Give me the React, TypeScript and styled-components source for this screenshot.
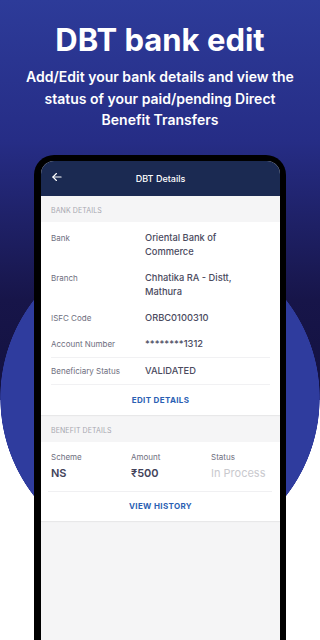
import React from "react";
import styled, { createGlobalStyle } from "styled-components";

const Global = createGlobalStyle`
  html, body { margin: 0; padding: 0; }
  body { font-family: Inter, "Noto Sans", sans-serif; -webkit-font-smoothing: antialiased; }
  * { box-sizing: border-box; }
`;

const Page = styled.div`
  width: 320px;
  height: 640px;
  overflow: hidden;
  display: flex;
  flex-direction: column;
  align-items: center;
  background:
    radial-gradient(circle 160px at 160px 398px, #2f3c9e 159.4px, rgba(47, 60, 158, 0) 160px),
    linear-gradient(180deg, #2d3b99 0px, #262d86 140px, #171549 300px, #131140 400px, #ffffff 400px);
`;

const Title = styled.h1`
  margin: 21px 0 0;
  font-size: 31px;
  line-height: 38px;
  font-weight: 700;
  color: #ffffff;
  text-align: center;
`;

const Subtitle = styled.p`
  margin: 7px 0 0;
  width: 272px;
  font-size: 14px;
  line-height: 21.5px;
  font-weight: 600;
  color: #ffffff;
  text-align: center;
`;

const PhoneFrame = styled.div`
  margin-top: 24px;
  width: 252px;
  flex: 1;
  background: #000;
  border-radius: 20px 20px 0 0;
  padding: 6px 6px 0 7px;
  display: flex;
`;

const Screen = styled.div`
  flex: 1;
  background: #f5f5f6;
  border-radius: 13px 13px 0 0;
  overflow: hidden;
  display: flex;
  flex-direction: column;
`;

const AppBar = styled.div`
  height: 35px;
  background: #1b2a52;
  position: relative;
  display: flex;
  align-items: center;
  justify-content: center;
  color: #fff;
  font-size: 9px;
  font-weight: 500;
`;

const BackButton = styled.span`
  position: absolute;
  left: 9px;
  top: 9px;
  display: flex;
`;

const SectionLabel = styled.div<{ $h: number }>`
  height: ${(p) => p.$h}px;
  padding: 4px 10px 0;
  display: flex;
  align-items: center;
  font-size: 7px;
  letter-spacing: 0.1px;
  color: #a7a7b0;
  text-transform: uppercase;
`;

const Card = styled.div`
  background: #fff;
  box-shadow: 0 1px 1px rgba(0, 0, 0, 0.05);
`;

const DetailList = styled.div`
  padding: 3px 10px 0;
  display: flex;
  flex-direction: column;
`;

const DetailRow = styled.div<{ $divider?: boolean }>`
  display: grid;
  grid-template-columns: 94px 1fr;
  padding: 6px 0;
  ${(p) => (p.$divider ? "border-bottom: 1px solid #f1f1f3;" : "")}
`;

const Label = styled.div`
  font-size: 8px;
  line-height: 14px;
  color: #6e6e7e;
`;

const Value = styled.div`
  font-size: 9.3px;
  line-height: 14px;
  font-weight: 500;
  color: #4a4a5e;
`;

const ActionRow = styled.div<{ $h: number }>`
  height: ${(p) => p.$h}px;
  display: flex;
  align-items: center;
  justify-content: center;
  font-size: 8px;
  font-weight: 700;
  letter-spacing: 0.35px;
  color: #2b5fb3;
`;

const BenefitGrid = styled.div`
  display: grid;
  grid-template-columns: 80px 80px 1fr;
  padding: 9px 0 11px 3px;
  margin: 0 8px 0 7px;
  border-bottom: 1px solid #f0f0f2;
`;

const BenefitCell = styled.div`
  display: flex;
  flex-direction: column;
  gap: 3px;
`;

const BenefitLabel = styled.div`
  font-size: 8px;
  line-height: 12px;
  color: #6e6e7e;
`;

const BenefitValue = styled.div<{ $muted?: boolean }>`
  font-size: 11px;
  line-height: 14px;
  white-space: nowrap;
  font-weight: ${(p) => (p.$muted ? 400 : 600)};
  color: ${(p) => (p.$muted ? "#c9c9ce" : "#43435a")};
`;

const details: { label: string; value: React.ReactNode; divider?: boolean }[] = [
  { label: "Bank", value: <>Oriental Bank of<br />Commerce</> },
  { label: "Branch", value: <>Chhatika RA - Distt,<br />Mathura</> },
  { label: "ISFC Code", value: "ORBC0100310" },
  { label: "Account Number", value: "********1312", divider: true },
  { label: "Beneficiary Status", value: "VALIDATED", divider: true },
];

const benefits = [
  { label: "Scheme", value: "NS" },
  { label: "Amount", value: "₹500" },
  { label: "Status", value: "In Process", muted: true },
];

export default function App() {
  return (
    <>
      <Global />
      <Page>
        <Title>DBT bank edit</Title>
        <Subtitle>
          Add/Edit your bank details and view the status of your paid/pending Direct Benefit Transfers
        </Subtitle>
        <PhoneFrame>
          <Screen>
            <AppBar>
              <BackButton>
                <svg width="14" height="14" viewBox="0 0 24 24" fill="none" stroke="#ffffff" strokeWidth="2" strokeLinecap="round" strokeLinejoin="round">
                  <path d="M19 12H5" />
                  <path d="m11 18-6-6 6-6" />
                </svg>
              </BackButton>
              DBT Details
            </AppBar>
            <SectionLabel $h={26}>Bank Details</SectionLabel>
            <Card>
              <DetailList>
                {details.map((d) => (
                  <DetailRow key={d.label} $divider={d.divider}>
                    <Label>{d.label}</Label>
                    <Value>{d.value}</Value>
                  </DetailRow>
                ))}
              </DetailList>
              <ActionRow $h={30}>EDIT DETAILS</ActionRow>
            </Card>
            <SectionLabel $h={27}>Benefit Details</SectionLabel>
            <Card>
              <BenefitGrid>
                {benefits.map((b) => (
                  <BenefitCell key={b.label}>
                    <BenefitLabel>{b.label}</BenefitLabel>
                    <BenefitValue $muted={b.muted}>{b.value}</BenefitValue>
                  </BenefitCell>
                ))}
              </BenefitGrid>
              <ActionRow $h={29}>VIEW HISTORY</ActionRow>
            </Card>
          </Screen>
        </PhoneFrame>
      </Page>
    </>
  );
}
